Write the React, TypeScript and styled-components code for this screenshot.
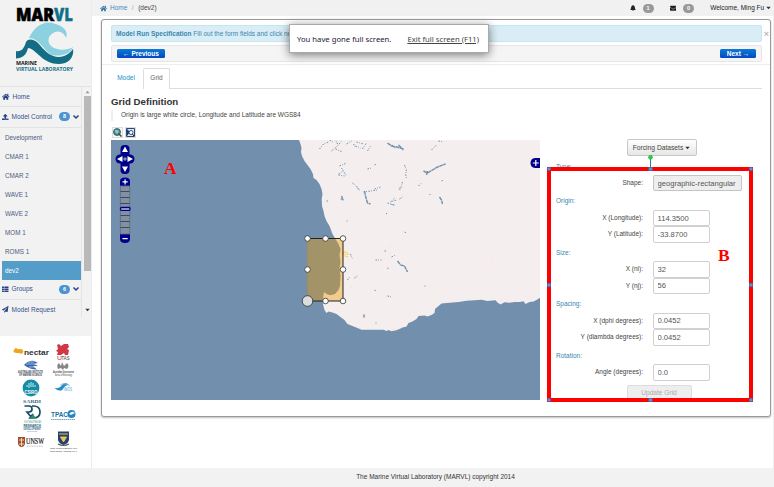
import React from "react";
import styled, { createGlobalStyle } from "styled-components";
import { FaHome, FaUpload, FaThList, FaBell, FaEnvelope, FaChevronDown, FaPaperPlane } from "react-icons/fa";

const GlobalStyle = createGlobalStyle`
  * { box-sizing: border-box; }
  html, body { margin: 0; padding: 0; overflow: hidden; background: #fff; }
  body { font: 6.5px/10px "Liberation Sans", Arial, sans-serif; color: #333; }
  svg { display: block; flex: none; }
`;

const Page = styled.div`
  display: grid;
  grid-template-columns: 92px 1fr;
  grid-template-rows: 468px 19px;
  width: 774px;
  height: 487px;
`;

const Sidebar = styled.aside`
  display: flex;
  flex-direction: column;
  background: #f2f2f2;
  border-right: 1px solid #ececec;
`;
const Brand = styled.div`
  height: 86px;
  padding: 6px 0 0 14px;
`;
const NavFrame = styled.div`
  display: flex;
  height: 231px;
  border-top: 1px solid #e2e2e2;
  overflow: hidden;
`;
const Nav = styled.nav`
  width: 82px;
  border-right: 1px solid #e4e4e4;
  color: #34508c;
`;
const NavItem = styled.div`
  display: flex;
  align-items: center;
  height: 20.3px;
  padding-left: 2px;
  gap: 3px;
  border-bottom: 1px solid #e2e2e2;
  white-space: nowrap;
  svg { color: #253e85; }
`;
const NavLabel = styled.span<{ $grow?: boolean }>`
  ${(p) => p.$grow && "flex: 1;"}
`;
const Chevron = styled(FaChevronDown)`
  margin-right: 2px;
  stroke: #253e85;
  stroke-width: 50px;
`;
const Count = styled.span`
  width: 11px;
  height: 9px;
  border-radius: 5px;
  background: #4b94d0;
  color: #fff;
  font: bold 5.5px/9px "Liberation Sans", Arial, sans-serif;
  text-align: center;
`;
const SubItem = styled.div<{ $active?: boolean }>`
  height: 19px;
  margin-left: 2px;
  padding-left: 3px;
  line-height: 19px;
  font-size: 6.3px;
  color: ${(p) => (p.$active ? "#fff" : "#4c5c80")};
  background: ${(p) => (p.$active ? "#559dc9" : "transparent")};
`;
const Scrollbar = styled.div`
  display: flex;
  flex-direction: column;
  align-items: center;
  justify-content: space-between;
  width: 9px;
  padding: 3px 0 5px 1px;
`;
const Thumb = styled.div`
  width: 7px;
  height: 175px;
  background: #b9b9b9;
  margin-bottom: 36px;
`;
const Sponsors = styled.div`
  height: 132px;
  margin-top: 19px;
  background: #fff;
`;

const Main = styled.main`
  display: flex;
  flex-direction: column;
  min-width: 0;
  border-right: 1px solid #eee;
`;
const TopBar = styled.header`
  display: flex;
  align-items: center;
  height: 16px;
  padding: 0 2px 0 8px;
  background: #f1f1f1;
  white-space: nowrap;
  color: #222;
`;
const Crumb = styled.span<{ $link?: boolean; $muted?: boolean }>`
  color: ${(p) => (p.$link ? "#3b8bbd" : p.$muted ? "#aaa" : "#444")};
  margin-left: ${(p) => (p.$link ? "3px" : "4.500px")};
`;
const Spacer = styled.div`
  flex: 1;
`;
const GreyCount = styled.span<{ $gap: number }>`
  width: 11px;
  height: 9px;
  margin: 0 ${(p) => p.$gap}px 0 7px;
  border-radius: 5px;
  background: #999;
  color: #fff;
  font: bold 5.5px/9px "Liberation Sans", Arial, sans-serif;
  text-align: center;
`;

const Dialog = styled.section`
  position: relative;
  display: flex;
  flex-direction: column;
  width: 670px;
  height: 398px;
  margin: 3px 0 0 9px;
  padding: 5px 8px 0 9px;
  background: #fff;
  border: 1px solid #999;
  border-radius: 3px;
  box-shadow: 0 1px 2px rgba(0, 0, 0, 0.25);
`;
const Alert = styled.div`
  height: 17px;
  border: 1px solid #c4e6ef;
  border-radius: 2px;
  background: #d9edf7;
  color: #3a87ad;
  padding-left: 4px;
  line-height: 15px;
`;
const Close = styled.span`
  position: absolute;
  right: 1px;
  top: 9px;
  color: #bbb;
  font-weight: bold;
  font-size: 9px;
`;
const StepBar = styled.div`
  display: flex;
  align-items: center;
  justify-content: space-between;
  height: 17px;
  margin-top: 3px;
  padding: 0 5px;
  border: 1px solid #e6e6e6;
  border-radius: 2px;
  background: #f5f5f5;
`;
const StepButton = styled.button<{ $width: number }>`
  width: ${(p) => p.$width}px;
  height: 9px;
  padding: 0;
  border: 0;
  border-radius: 1.5px;
  background: linear-gradient(#0a7cd4, #0448c4);
  color: #fff;
  font: bold 6.500px/9px "Liberation Sans", Arial, sans-serif;
  text-align: center;
`;
const Divider = styled.div`
  height: 1px;
  margin: 2px -8px 0 -9px;
  background: #eee;
`;
const Tabs = styled.div`
  display: flex;
  height: 24px;
  padding-top: 3px;
  border-bottom: 1px solid #ddd;
`;
const Tab = styled.div<{ $active?: boolean }>`
  width: ${(p) => (p.$active ? 27 : 32)}px;
  height: 21px;
  padding-right: ${(p) => (p.$active ? 0 : 2)}px;
  line-height: ${(p) => (p.$active ? 18 : 20)}px;
  text-align: center;
  border: ${(p) => (p.$active ? "1px solid #ddd" : "0")};
  border-bottom: 0;
  border-radius: 2px 2px 0 0;
  background: #fff;
  color: ${(p) => (p.$active ? "#666" : "#1b8fc8")};
`;
const Title = styled.h1`
  margin: 6px 0 0;
  font-size: 9.7px;
  line-height: 13px;
  height: 13px;
  font-weight: bold;
`;
const Note = styled.div`
  height: 11px;
  margin-top: 2px;
  padding-left: 8px;
  border-left: 2px solid #eee;
  line-height: 10px;
  color: #444;
  overflow: hidden;
`;
const Tools = styled.div`
  display: flex;
  gap: 2px;
  height: 19px;
  padding: 6px 0 0 1px;
`;
const ToolButton = styled.div`
  width: 11px;
  height: 11px;
  border: 1px solid #ddd;
  background: #fafafa;
`;
const Workspace = styled.div`
  display: flex;
  height: 260px;
`;
const FormPane = styled.div`
  position: relative;
  flex: 1;
  display: flex;
  flex-direction: column;
`;
const DropButton = styled.button`
  display: flex;
  align-items: center;
  justify-content: center;
  gap: 2px;
  width: 70px;
  height: 17px;
  margin: -1px 0 0 86.5px;
  padding: 0;
  border: 1px solid #c8c8c8;
  border-radius: 2px;
  background: linear-gradient(#fff, #e6e6e6);
  color: #444;
  font: 6.700px/15px "Liberation Sans", Arial, sans-serif;
`;
const Fields = styled.form`
  display: flex;
  flex-direction: column;
  height: 241px;
  margin: 5px 0 0 16px;
  overflow: hidden;
`;
const SectionName = styled.div<{ $first?: boolean }>`
  flex: none;
  height: ${(p) => (p.$first ? 14 : 18.6)}px;
  line-height: ${(p) => (p.$first ? 11 : 20)}px;
  color: #3a87ad;
`;
const FieldRow = styled.label`
  display: grid;
  flex: none;
  grid-template-columns: 87px auto;
  column-gap: 10px;
  justify-content: start;
  height: 16.4px;
  line-height: 16px;
  text-align: right;
  color: #444;
`;
const Input = styled.input<{ $wide?: boolean }>`
  width: ${(p) => (p.$wide ? 89 : 57)}px;
  height: 16.4px;
  padding: 0 3.5px;
  border: 1px solid ${(p) => (p.$wide ? "#c4c4c4" : "#d0d0d0")};
  border-radius: 2px;
  background: ${(p) => (p.$wide ? "#eee" : "#fff")};
  color: #555;
  font: 7.6px "Liberation Sans", Arial, sans-serif;
  outline: 0;
`;
const Update = styled.button`
  width: 65px;
  height: 15px;
  margin: 4.500px 0 0 70.5px;
  padding: 0;
  flex: none;
  border: 1px solid #ddd;
  border-radius: 2px;
  background: #eee;
  color: #aaa;
  font: 6.6px/13px "Liberation Sans", Arial, sans-serif;
`;
const Annotation = styled.svg`
  position: absolute;
  left: 4px;
  top: 12px;
  pointer-events: none;
`;
const Toast = styled.div`
  position: absolute;
  left: 289px;
  top: 24px;
  display: flex;
  align-items: center;
  gap: 16px;
  width: 200px;
  height: 29px;
  padding-left: 7px;
  background: #fff;
  border: 1px solid #aaa;
  box-shadow: 0 2px 9px rgba(0, 0, 0, 0.5);
  color: #223;
  font: 7.700px/12px "Noto Sans", "Open Sans", sans-serif;
  white-space: nowrap;
`;
const Exit = styled.span`
  text-decoration: underline;
  color: #444;
`;
const Footer = styled.footer`
  grid-column: 1 / 3;
  background: #f2f2f2;
  text-align: center;
  padding-left: 97px;
  line-height: 17px;
  color: #333;
`;

const Caret = ({ color = "#333", flip = false }: { color?: string; flip?: boolean }) => (
  <svg width="5" height="4" viewBox="0 0 5 4">
    <path d={flip ? "M0.5 3.3L2.5 0.8L4.5 3.3z" : "M0.3 0.7h4.4L2.5 3.3z"} fill={color} />
  </svg>
);

const MarvlLogo = () => (
  <svg width="62" height="68" viewBox="14 6 62 68">
    <g fontFamily="Open Sans, sans-serif" fontWeight="800">
      <text x="16" y="21.3" fontSize="17" textLength="38" lengthAdjust="spacingAndGlyphs" fill="#000" stroke="#000" strokeWidth=".6">MAR</text>
      <text x="54" y="21.3" fontSize="17" textLength="19" lengthAdjust="spacingAndGlyphs" fill="#11708a" stroke="#11708a" strokeWidth=".3">VL</text>
    </g>
    <path d="M29 38C34 27 44 20 54 23.500C63 26 69 31 66 38C65 34 60 30 55 32C47 35 46 44 54 48C61 51 68 50 73 47C70 54 61 57 52 55C44 51 39 38 29 38z" fill="#8bd1df" />
    <path d="M16 51C21 52 24 49 26 42C28 38 34 39 38 43C44 50 50 57 59 57C65 57 70 53 73 49C74 55 71 61 65 63C56 66 46 62 40 56C35 52 32 48 28 48C26 56 22 58 16 58.500z" fill="#126d85" />
    <g fontFamily="Open Sans, sans-serif" fontWeight="bold">
      <text x="16" y="65.2" fontSize="5" textLength="21" lengthAdjust="spacingAndGlyphs" fill="#111">MARINE</text>
      <text x="16" y="70.8" fontSize="5" textLength="57" lengthAdjust="spacingAndGlyphs" fill="#126d85">VIRTUAL LABORATORY</text>
    </g>
  </svg>
);

const Fit = (p: React.SVGProps<SVGTextElement>) => <text lengthAdjust="spacingAndGlyphs" {...p} />;

const SponsorLogos = () => (
  <svg width="91" height="131" viewBox="0 336 91 131" fontFamily="Liberation Sans, sans-serif">
    <g fill="#f0a51e">
      <ellipse cx="18" cy="351" rx="4.5" ry="2" />
      <circle cx="16" cy="349.500" r="1.500" />
      <circle cx="21" cy="351.500" r="2.200" />
    </g>
    <Fit x="24" y="354.500" fontSize="7.500" fontWeight="bold" textLength="25" fill="#333">nectar</Fit>
    <path d="M57 345l2-1 2 2 3-2 4 0 1 3-2 2 2 1-1 5h-3l-1-2-3 2-4 0 1-3-2-1 2-2z" fill="#d33744" />
    <Fit x="57" y="359.700" fontSize="6" textLength="5" fill="#b22">U</Fit>
    <Fit x="61.500" y="359.700" fontSize="6" textLength="8" fill="#333">TAS</Fit>
    <path d="M24 365q5-5 10-4l4 2-4 1 4 2-5 0 4 3.500q-7 0-13-4.500z" fill="#3a66b0" />
    <path d="M26 364h11M29 367h8M28 362h6" stroke="#dfe9f8" strokeWidth=".6" />
    <Fit x="18" y="373" fontSize="3" fontWeight="bold" textLength="25" fill="#445">AUSTRALIAN INSTITUTE</Fit>
    <Fit x="19" y="375.900" fontSize="2.800" fontWeight="bold" textLength="23" fill="#445">OF MARINE SCIENCE</Fit>
    <path d="M58 369q-2-4 1-6l2 3 1-4 2 4 3-3q3 3 0 6l-3-1-1 2-2-2z" fill="#888" />
    <Fit x="53" y="372.700" fontSize="3" fontWeight="bold" textLength="21" fill="#444">Australian Government</Fit>
    <Fit x="55" y="375.800" fontSize="2.800" textLength="17" fill="#444">Bureau of Meteorology</Fit>
    <circle cx="31" cy="388" r="8.400" fill="#158ca3" />
    <path d="M27 387v-2m2 3v-5m2 4v-5m2 5v-4m2 4v-2" stroke="#c6edf0" strokeWidth="1" />
    <Fit x="24.500" y="393.500" fontSize="4.500" fontWeight="bold" textLength="13" fill="#fff">CSIRO</Fit>
    <path d="M54 388q5 1 8-3t7 0q-4 0-6 4t-9-1z" fill="#2a8cc6" />
    <path d="M60 385q5-3 10 1" stroke="#8bd" strokeWidth=".8" fill="none" />
    <Fit x="64" y="390.500" fontSize="5" textLength="8" fill="#48a5d6">IMOS</Fit>
    <Fit x="23" y="402.500" fontSize="4.800" fontFamily="Liberation Serif" fontWeight="bold" textLength="18" fill="#355f7a">SARDI</Fit>
    <path d="M24.500 406h4.500q3 0 3 3t-3 3h-2l5 6M32 406h1.500q6.500 0 6.500 6t-6.500 6H30l3-4" fill="none" stroke="#164d68" strokeWidth="1.700" />
    <path d="M30 418l3-4 3 4z" fill="#27935e" />
    <Fit x="24" y="423" fontSize="2.600" textLength="17" fill="#498">SOUTH AUSTRALIAN</Fit>
    <Fit x="23.500" y="426.500" fontSize="4" fontWeight="bold" textLength="17.500" fill="#235b75">RESEARCH</Fit>
    <Fit x="23.500" y="429.800" fontSize="3.300" fontWeight="bold" textLength="17.500" fill="#468">DEVELOPMENT</Fit>
    <Fit x="27" y="432.300" fontSize="2.500" textLength="10" fill="#498">INSTITUTE</Fit>
    <Fit x="51" y="417" fontSize="7" fontWeight="bold" textLength="17" fill="#23709f">TPAC</Fit>
    <circle cx="71.500" cy="414" r="4" fill="#2884bd" />
    <path d="M69 414q3-4 6-1l-4 2z" fill="#e1f4ff" />
    <path d="M51 419.500h24" stroke="#68a4c9" strokeWidth="1" strokeDasharray="1.500 .6" />
    <path d="M18 437h7v7q-1 3-3.500 3T18 444z" fill="#a54c32" />
    <path d="M19 440h5M21.500 438v8M19 444h5" stroke="#eadca9" strokeWidth="1" />
    <Fit x="26" y="444" fontFamily="Liberation Serif" fontSize="8" textLength="18" fill="#222" stroke="#222" strokeWidth=".2">UNSW</Fit>
    <path d="M27 446.200h16" stroke="#999" strokeWidth=".7" strokeDasharray="1 .7" />
    <path d="M58 431.500h11v8.500q-1 4-5.500 5-4.500-1-5.500-5z" fill="#253f79" />
    <path d="M59 434h9M60.500 437l3 5 3-5z" stroke="#e5c645" strokeWidth="1" fill="#e9cb4f" />
    <path d="M58 444q5.500 3 11 0" stroke="#555" strokeWidth="1.200" fill="none" />
    <Fit x="50" y="449.300" fontFamily="Liberation Serif" fontWeight="bold" fontSize="2.900" textLength="27" fill="#333">THE UNIVERSITY OF</Fit>
    <Fit x="50" y="452.200" fontFamily="Liberation Serif" fontWeight="bold" fontSize="2.900" textLength="27" fill="#333">WESTERN AUSTRALIA</Fit>
  </svg>
);

const coast =
  "M298.5 140L300 144L301 148L300.5 152L301.500 156L304 161L307 165L310 169L312.500 174L313 178L316 180L319 184L321 189L322 194L321.200 199L321.500 206L323 211L324 216L326 221L329 226L332 234L335 239L338 244L340 249L339 255L340 262L339 268L340 276L339.500 286L338 290L334.500 294L330 295.300L326 294L323.500 292L322.700 297L322.500 304L324 310L326 313L328 311.500L332 312.500L336 314L340 317L344 320L347 324L352 326L357 328L361 329.700L383 329.700L386 331L388 330L391 331.200L395 330.500L399 329L402 327.500L406 326.500L408 323L412 321.500L416 319L418 316L424 315.500L427 316.500L431 315L434 313L434.500 309L438 306L441 303.500L446 303L452 302.600L458 302L466 300.700L474 300.200L481 299.800L487 301L495 300.200L497 302.500L500 304.500L504 302.300L509 302.800L514 302L519 302L523 301.200L525 304L529 302L533 301.500L536 300L540 297.500L540 140Z";

const lakes = [
  "M319 149l4-5 5-2m1-2l4 2",
  "M331 151l6-5 4-5m-6 8l7 3m-5-8l-2-4",
  "M346 144l5-3m4 5l5 2m-4-6l7 2m-10 0l2 3",
  "M362 149l4-6m1 8l3-5",
  "M431 150l5-5m2-4l5 1",
  "M339 166l7-3m-8 11l5-3m-2-3l5 8m-8-1l6 1",
  "M367 169l4-1m3-3l2-1",
  "M404 165l2 5-1 4 1 5m-4 3l-1 4-3 3",
  "M418 186l3-3M441 181l2-1M429 195l1-1",
  "M352 183l4 3 3 4-4-3M363 192l14-2m-3-1l6-2",
  "M394 198l-4 4 6-2M387 203l6 2m6-6l3-2m-8 8l-5-1",
  "M399 190l2-3M386 213v1M346 221h1M404 232l2 1",
  "M384 251h2M391 257l4-2M375 260h6M387 269l1-2",
  "M347 280l2-3m5 1l3-2M374 290l2 1m11 5l4 1",
  "M424 286h1M375 323h1M326 201h2M350 254l2 5",
];
const lakesBold = [
  "M387 143l4 3 5 1 7 2M391 145l4 3m3-3l5 5",
  "M423 171l4 2 5-3 5-3 8-3M427 171l-1 4",
  "M364 191l1 5 2 7 3 1M341 196l1 2-1 1 2 1",
  "M439 197l2 3 1 4M363.500 314.500v3M397 261l3 4 4 1 3 6",
];

const handles = [
  [307, 238.500], [325, 238.500], [342.500, 238.500],
  [307, 269.500], [342.500, 269.500], [325, 301], [342.500, 301],
];

const MapView = () => (
  <svg width="429" height="260" viewBox="110.500 140 429 260">
    <rect x="110" y="140" width="430" height="260" fill="#7290ad" />
    <path d={coast} fill="#f5eeee" />
    <g fill="none" stroke="#6f90ae">
      {lakes.map((d) => <path key={d} d={d} strokeWidth="1" strokeDasharray="1.500 1.200 .8 1.500" />)}
      {lakesBold.map((d) => <path key={d} d={d} strokeWidth="1.400" strokeDasharray="4 .5" />)}
    </g>
    <g stroke="#f7da69" strokeWidth="1.200" fill="none">
      <path d="M342 252l6 1m-5 2l5-1m-6 0l3-3m-1 5l4 1" />
      <path d="M389 246h1M350 287h1M385 296h1M393 329v2M490 259h1M481 224h1" opacity=".7" />
    </g>
    <rect x="307" y="238.500" width="35.500" height="62.500" fill="#e90" fillOpacity=".4" />
    <path d="M307 238.500v62.500" stroke="#a88b3f" strokeWidth=".8" />
    <path d="M307 238.500h35.500V301H307" fill="none" stroke="#222" strokeWidth="1" />
    {handles.map(([x, y]) => <circle key={x + "-" + y} cx={x} cy={y} r="2.800" fill="#fff" stroke="#333" strokeWidth=".8" />)}
    <circle cx="307" cy="301" r="5.300" fill="#ddd" stroke="#333" strokeWidth=".8" />
    <g fill="#00008b">
      <rect x="120" y="145" width="9" height="29" rx="4" />
      <rect x="115" y="154.500" width="19" height="9" rx="4.500" />
      <circle cx="124.500" cy="159" r="6" />
      <path d="M119.500 186v-5q0-3.500 5-3.500t5 3.500v5zM119.500 234h10v5q0 4-5 4t-5-4z" />
    </g>
    <circle cx="124.500" cy="159" r="1.800" fill="#7290ad" />
    <g fill="#fff">
      <path d="M124.500 146.500l3 5.500h-6zM124.500 172l3-5.500h-6zM116.500 159l5.500-3v6zM132.500 159l-5.500-3v6z" />
      <path d="M122 181.300h2v-2h1.200v2h2v1.300h-2v2h-1.200v-2h-2zM122 238h5.200v1.300H122z" />
    </g>
    <rect x="119.800" y="186" width="9.500" height="48" fill="#7f91a2" stroke="#5d6d7e" strokeWidth=".8" />
    <path d="M120 191.500h9M120 197.500h9M120 203.500h9M120 215.500h9M120 221.500h9M120 227.500h9" stroke="#334" strokeWidth=".8" />
    <rect x="120" y="207.500" width="9.500" height="2.800" rx="1" fill="#b9c4d8" stroke="#00008b" strokeWidth="1.300" />
    <path d="M540 158h-5.500q-4.500.5-4.500 5t4.500 5H540z" fill="#00008b" />
    <path d="M535.300 160v6M532.300 163h6" stroke="#fff" strokeWidth="1.200" />
    <text x="163.500" y="174" fill="#f00" fontFamily="Liberation Serif, serif" fontWeight="bold" fontSize="17.500">A</text>
  </svg>
);

const AnnotationFrame = () => (
  <Annotation width="212" height="252" viewBox="544 152 212 252">
    <path d="M650.500 157v12" stroke="#3b6fad" />
    <circle cx="650.500" cy="157.300" r="2" fill="#16e02e" stroke="#2a8f3b" strokeWidth=".5" />
    <rect x="549" y="169" width="202" height="231" fill="none" stroke="#f00" strokeWidth="4" />
    <g fill="#5b95e0" stroke="#3c6db2" strokeWidth=".6">
      {[[549, 169], [751, 169], [549, 400], [751, 400]].map(([x, y]) => <circle key={x + "," + y} cx={x} cy={y} r="1.800" />)}
      {[[650.500, 169], [549, 285], [751, 285], [650.500, 400]].map(([x, y]) => <rect key={x + "," + y} x={x - 1.700} y={y - 1.700} width="3.400" height="3.400" />)}
    </g>
    <text x="718" y="261" fill="#f00" fontFamily="Liberation Serif, serif" fontWeight="bold" fontSize="17.500">B</text>
  </Annotation>
);

const sections = [
  { name: "Origin:", fields: [["X (Longitude):", "114.3500"], ["Y (Latitude):", "-33.8700"]] },
  { name: "Size:", fields: [["X (ni):", "32"], ["Y (nj):", "56"]] },
  { name: "Spacing:", fields: [["X (dphi degrees):", "0.0452"], ["Y (dlambda degrees):", "0.0452"]] },
  { name: "Rotation:", fields: [["Angle (degrees):", "0.0"]] },
];
const models = ["Development", "CMAR 1", "CMAR 2", "WAVE 1", "WAVE 2", "MOM 1", "ROMS 1", "dev2"];

export default function App() {
  return (
    <>
      <GlobalStyle />
      <Page>
        <Sidebar>
          <Brand><MarvlLogo /></Brand>
          <NavFrame>
            <Nav>
              <NavItem><FaHome size={7.500} /><NavLabel>Home</NavLabel></NavItem>
              <NavItem>
                <FaUpload size={6.500} /><NavLabel $grow>Model Control</NavLabel><Count>8</Count><Chevron size={6} />
              </NavItem>
              {models.map((m) => <SubItem key={m} $active={m === "dev2"}>{m}</SubItem>)}
              <NavItem>
                <FaThList size={6.500} /><NavLabel $grow>Groups</NavLabel><Count>6</Count><Chevron size={6} />
              </NavItem>
              <NavItem><FaPaperPlane size={6.500} /><NavLabel>Model Request</NavLabel></NavItem>
            </Nav>
            <Scrollbar>
              <Caret flip color="#999" />
              <Thumb />
              <Caret />
            </Scrollbar>
          </NavFrame>
          <Sponsors><SponsorLogos /></Sponsors>
        </Sidebar>
        <Main>
          <TopBar>
            <FaHome size={7} color="#3578a8" />
            <Crumb $link>Home</Crumb><Crumb $muted>/</Crumb><Crumb>(dev2)</Crumb>
            <Spacer />
            <FaBell size={6} /><GreyCount $gap={16}>1</GreyCount>
            <FaEnvelope size={6.500} /><GreyCount $gap={16}>0</GreyCount>
            <NavLabel>Welcome, Ming Fu&nbsp;</NavLabel><Caret />
          </TopBar>
          <Dialog>
            <Close>×</Close>
            <Alert><b>Model Run Specification</b> Fill out the form fields and click next</Alert>
            <StepBar>
              <StepButton $width={48}>← Previous</StepButton>
              <StepButton $width={36}>Next →</StepButton>
            </StepBar>
            <Divider />
            <Tabs><Tab>Model</Tab><Tab $active>Grid</Tab></Tabs>
            <Title>Grid Definition</Title>
            <Note>Origin is large white circle, Longitude and Latitude are WGS84</Note>
            <Tools>
              <ToolButton>
                <svg width="9" height="9" viewBox="0 0 9 9">
                  <circle cx="4" cy="4" r="3.500" fill="#4d87a8" stroke="#24566b" strokeWidth=".8" />
                  <path d="M2 2l3 0 1 2-2 2-2-2z" fill="#9bc69b" /><path d="M5.500 5.500L8.500 8.500" stroke="#275b2b" strokeWidth="1.500" />
                </svg>
              </ToolButton>
              <ToolButton>
                <svg width="9" height="9" viewBox="0 0 9 9">
                  <path d="M.5.500h8v8h-8z" fill="#dce7f4" stroke="#2b477c" /><path d="M1 1l3 3-3 4z" fill="#173976" />
                  <circle cx="5" cy="4.500" r="2" fill="#fff" stroke="#36577b" /><path d="M6.500 6L8 8" stroke="#223" />
                </svg>
              </ToolButton>
            </Tools>
            <Workspace>
              <MapView />
              <FormPane>
                <DropButton type="button">Forcing Datasets <Caret /></DropButton>
                <Fields>
                  <SectionName $first>Type:</SectionName>
                  <FieldRow>Shape:<Input $wide readOnly value="geographic-rectangular" /></FieldRow>
                  {sections.map((s) => (
                    <React.Fragment key={s.name}>
                      <SectionName>{s.name}</SectionName>
                      {s.fields.map(([label, value]) => (
                        <FieldRow key={label}>{label}<Input defaultValue={value} /></FieldRow>
                      ))}
                    </React.Fragment>
                  ))}
                  <Update type="button">Update Grid</Update>
                </Fields>
                <AnnotationFrame />
              </FormPane>
            </Workspace>
          </Dialog>
        </Main>
        <Footer>The Marine Virtual Laboratory (MARVL) copyright 2014</Footer>
      </Page>
      <Toast><span>You have gone full screen.</span><Exit>Exit full screen (F11)</Exit></Toast>
    </>
  );
}
